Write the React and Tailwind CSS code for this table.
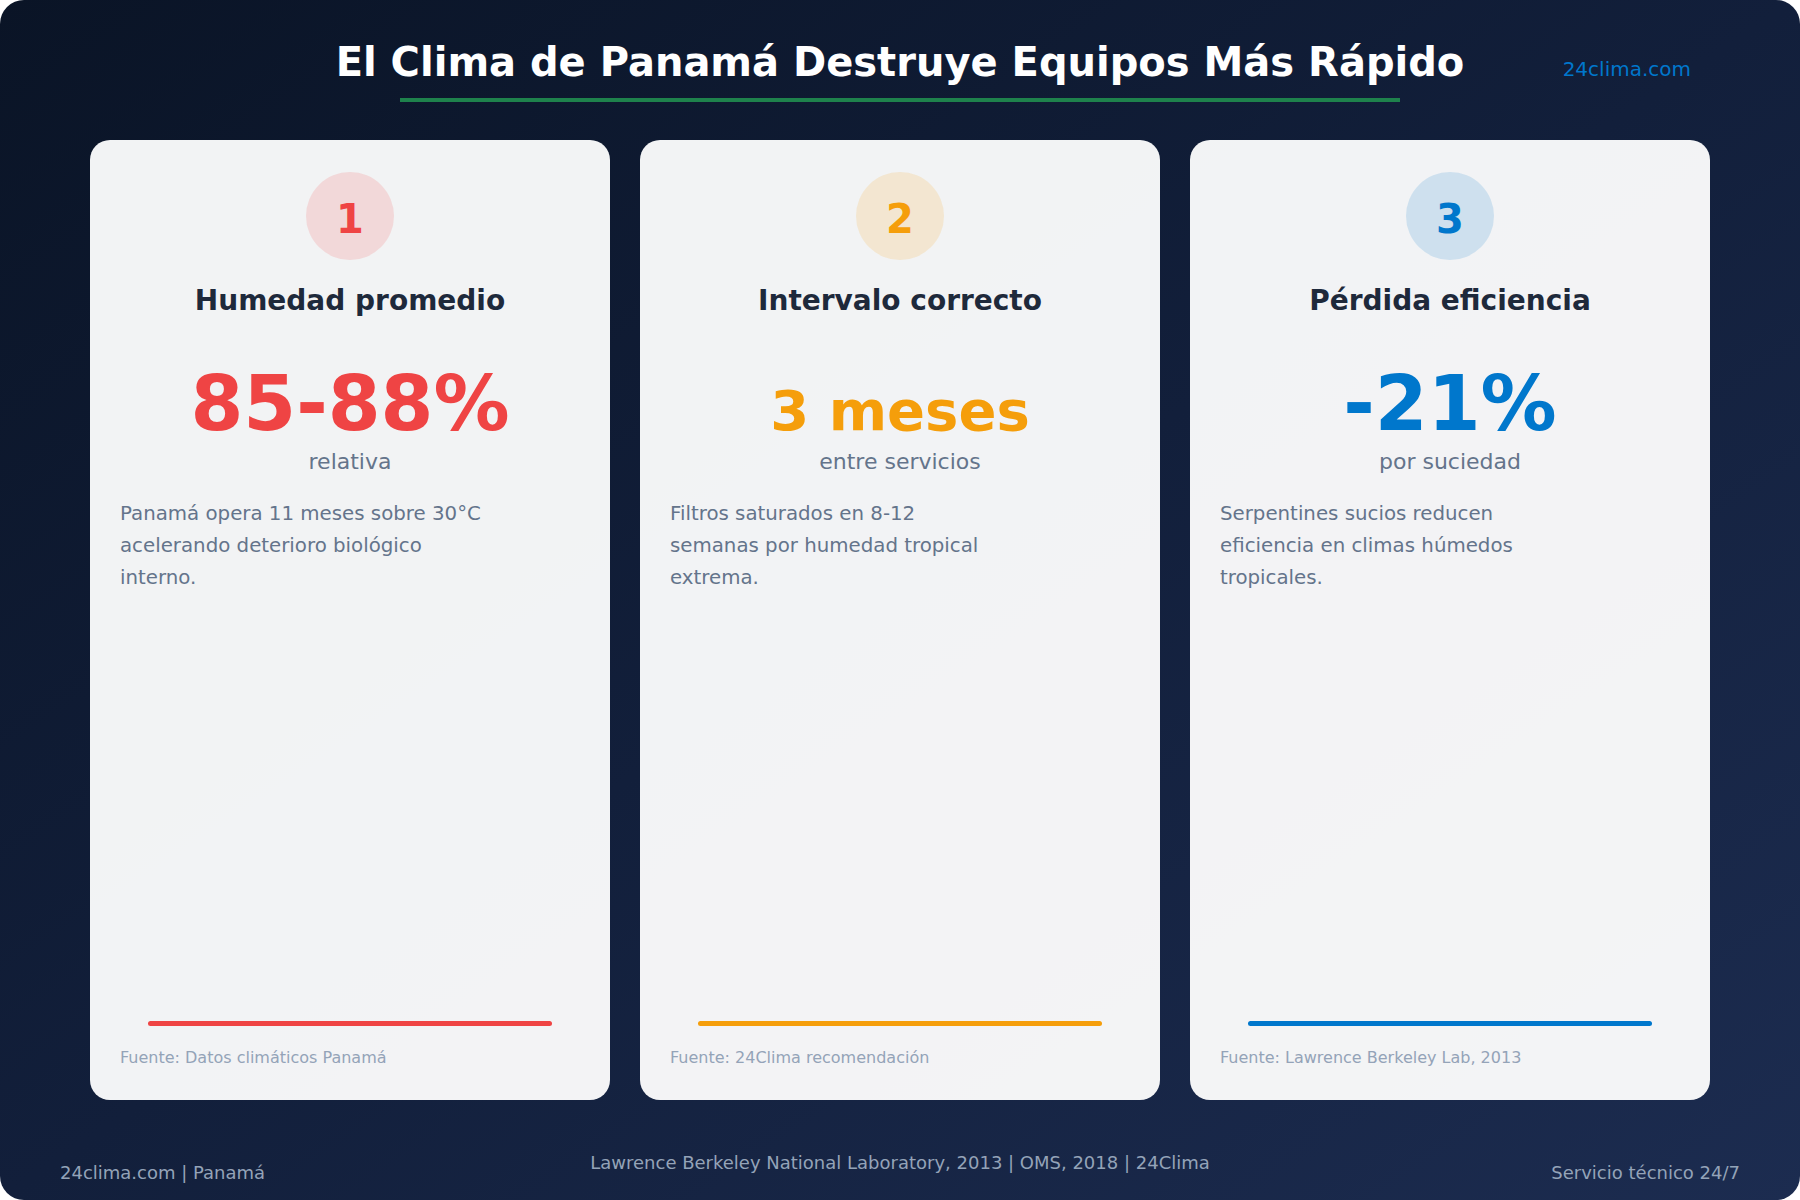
import React from "react";

const cards = [
  {
    n: "1",
    title: "Humedad promedio",
    value: "85-88%",
    valueCls: "text-[76px] leading-[76px] text-[#ef4444]",
    numCls: "text-[#ef4444]",
    circleCls: "bg-[#ef4444]/15",
    barCls: "bg-[#ef4444]",
    sub: "relativa",
    desc: ["Panamá opera 11 meses sobre 30°C", "acelerando deterioro biológico", "interno."],
    src: "Fuente: Datos climáticos Panamá",
  },
  {
    n: "2",
    title: "Intervalo correcto",
    value: "3 meses",
    valueCls: "text-[56px] leading-[90px] text-[#f59e0b]",
    numCls: "text-[#f59e0b]",
    circleCls: "bg-[#f59e0b]/15",
    barCls: "bg-[#f59e0b]",
    sub: "entre servicios",
    desc: ["Filtros saturados en 8-12", "semanas por humedad tropical", "extrema."],
    src: "Fuente: 24Clima recomendación",
  },
  {
    n: "3",
    title: "Pérdida eficiencia",
    value: "-21%",
    valueCls: "text-[76px] leading-[76px] text-[#0077cc]",
    numCls: "text-[#0077cc]",
    circleCls: "bg-[#0077cc]/15",
    barCls: "bg-[#0077cc]",
    sub: "por suciedad",
    desc: ["Serpentines sucios reducen", "eficiencia en climas húmedos", "tropicales."],
    src: "Fuente: Lawrence Berkeley Lab, 2013",
  },
];

function Card({ c }) {
  return (
    <div className="h-[960px] rounded-[20px] bg-white/95 px-[30px] pt-[32px] pb-[32px] flex flex-col">
      <div className={`mx-auto w-[88px] h-[88px] rounded-full flex items-center justify-center pt-[5px] ${c.circleCls}`}>
        <span className={`text-[40px] leading-none font-bold ${c.numCls}`}>{c.n}</span>
      </div>
      <div className="mt-[24px] text-center text-[28px] leading-[34px] font-bold text-[#1e293b]">{c.title}</div>
      <div className="mt-[48px] h-[76px] text-center">
        <div className={`font-bold whitespace-nowrap ${c.valueCls}`}>{c.value}</div>
      </div>
      <div className="mt-[5px] text-center text-[22px] leading-[30px] text-[#64748b]">{c.sub}</div>
      <div className="mt-[21px] text-[19.8px] leading-[32px] text-[#64748b]">
        {c.desc.map((l, i) => (
          <div key={i}>{l}</div>
        ))}
      </div>
      <div className="mt-auto">
        <div className={`mx-auto w-[404px] h-[5px] rounded-full ${c.barCls}`} />
        <div className="mt-[22px] text-[16px] leading-[20px] text-[#94a3b8]">{c.src}</div>
      </div>
    </div>
  );
}

export default function App() {
  return (
    <div
      className="w-[1800px] h-[1200px] rounded-[24px] overflow-hidden bg-linear-to-br from-[#0a1426] via-[#121f3b] to-[#1c2c50] flex flex-col"
      style={{ fontFamily: '"DejaVu Sans", Verdana, sans-serif' }}
    >
      <div className="pt-[38px] grid grid-cols-[1fr_auto_1fr] items-start">
        <div />
        <h1 className="text-[40px] leading-[48px] font-bold text-white whitespace-nowrap">
          El Clima de Panamá Destruye Equipos Más Rápido
        </h1>
        <div className="flex justify-end pr-[109px] pt-[14px]">
          <span className="text-[20px] leading-[34px] text-[#0077cc]">24clima.com</span>
        </div>
      </div>
      <div className="mx-auto mt-[12px] w-[1000px] h-[4px] bg-[#1e824c]" />
      <div className="mt-[38px] px-[90px] grid grid-cols-3 gap-[30px]">
        {cards.map((c) => (
          <Card key={c.n} c={c} />
        ))}
      </div>
      <div className="mt-[51px] px-[60px] grid grid-cols-[1fr_auto_1fr] items-start text-[#94a3b8] text-[18px] leading-[24px]">
        <div className="pt-[10px]">24clima.com | Panamá</div>
        <div className="whitespace-nowrap">Lawrence Berkeley National Laboratory, 2013 | OMS, 2018 | 24Clima</div>
        <div className="pt-[10px] text-right">Servicio técnico 24/7</div>
      </div>
    </div>
  );
}
